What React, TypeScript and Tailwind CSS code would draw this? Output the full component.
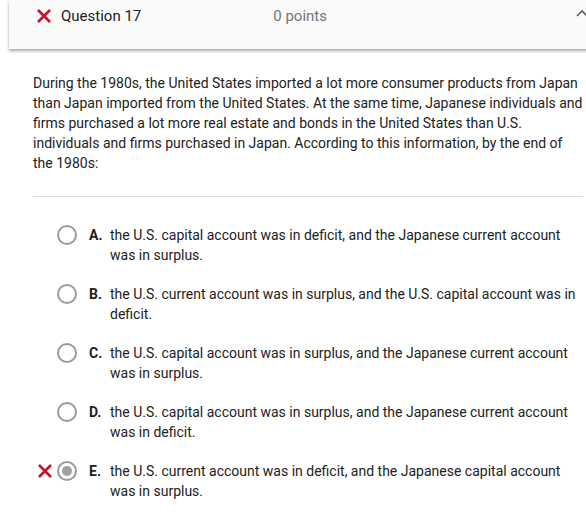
import React from "react";

const options = [
  { l: "A.", t: "the U.S. capital account was in deficit, and the Japanese current account was in surplus." },
  { l: "B.", t: "the U.S. current account was in surplus, and the U.S. capital account was in deficit." },
  { l: "C.", t: "the U.S. capital account was in surplus, and the Japanese current account was in surplus." },
  { l: "D.", t: "the U.S. capital account was in surplus, and the Japanese current account was in deficit." },
  { l: "E.", t: "the U.S. current account was in deficit, and the Japanese capital account was in surplus.", sel: true },
];

function XMark() {
  return (
    <svg width="16" height="16" viewBox="0 0 16 16">
      <path d="M2 2 L14 14 M14 2 L2 14" stroke="#c8102e" strokeWidth="2.6" strokeLinecap="butt" />
    </svg>
  );
}

export default function App() {
  return (
    <div className="w-[586px] h-[517px] overflow-hidden bg-white text-[#222222]" style={{ fontFamily: "Roboto, 'Noto Sans', sans-serif" }}>
      <div className="ml-[9px] w-[600px] h-[49px] bg-[#fafafa] shadow-[0_2px_3px_rgba(0,0,0,0.35)] flex items-start pt-[8px] relative">
        <div className="ml-[27px] mt-[0px]"><XMark /></div>
        <div className="ml-[9px] text-[15px] leading-[16px] text-[#212121]">Question 17</div>
        <div className="ml-[132px] text-[15px] leading-[16px] text-[#757575]">0 points</div>
        <svg className="absolute left-[567px] top-[9px]" width="12" height="10" viewBox="0 0 12 10">
          <path d="M1 7 L6 2 L11 7" stroke="#616161" strokeWidth="1.6" fill="none" />
        </svg>
      </div>
      <div className="pl-[33px] w-[583px]">
        <p className="mt-[24px] text-[14px] leading-[20px]">
          During the 1980s, the United States imported a lot more consumer products from Japan than Japan imported from the United States. At the same time, Japanese individuals and firms purchased a lot more real estate and bonds in the United States than U.S. individuals and firms purchased in Japan. According to this information, by the end of the 1980s:
        </p>
        <div className="mt-[23px] h-px bg-[#e0e0e0]" />
        <div className="mt-[28px] flex flex-col gap-[19px]">
          {options.map((o) => (
            <div key={o.l} className="flex items-start">
              <div className="w-[24px] pt-[2px] pl-[4px]">{o.sel ? <XMark /> : null}</div>
              <div className="w-[20px] h-[20px] rounded-full border-2 border-[#9a9a9a] flex items-center justify-center shrink-0">
                {o.sel ? <div className="w-[10px] h-[10px] rounded-full bg-[#a0a0a0]" /> : null}
              </div>
              <div className="ml-[12px] w-[21px] text-[14px] leading-[20px] font-bold shrink-0">{o.l}</div>
              <div className="flex-1 text-[14px] leading-[20px]">{o.t}</div>
            </div>
          ))}
        </div>
      </div>
    </div>
  );
}
